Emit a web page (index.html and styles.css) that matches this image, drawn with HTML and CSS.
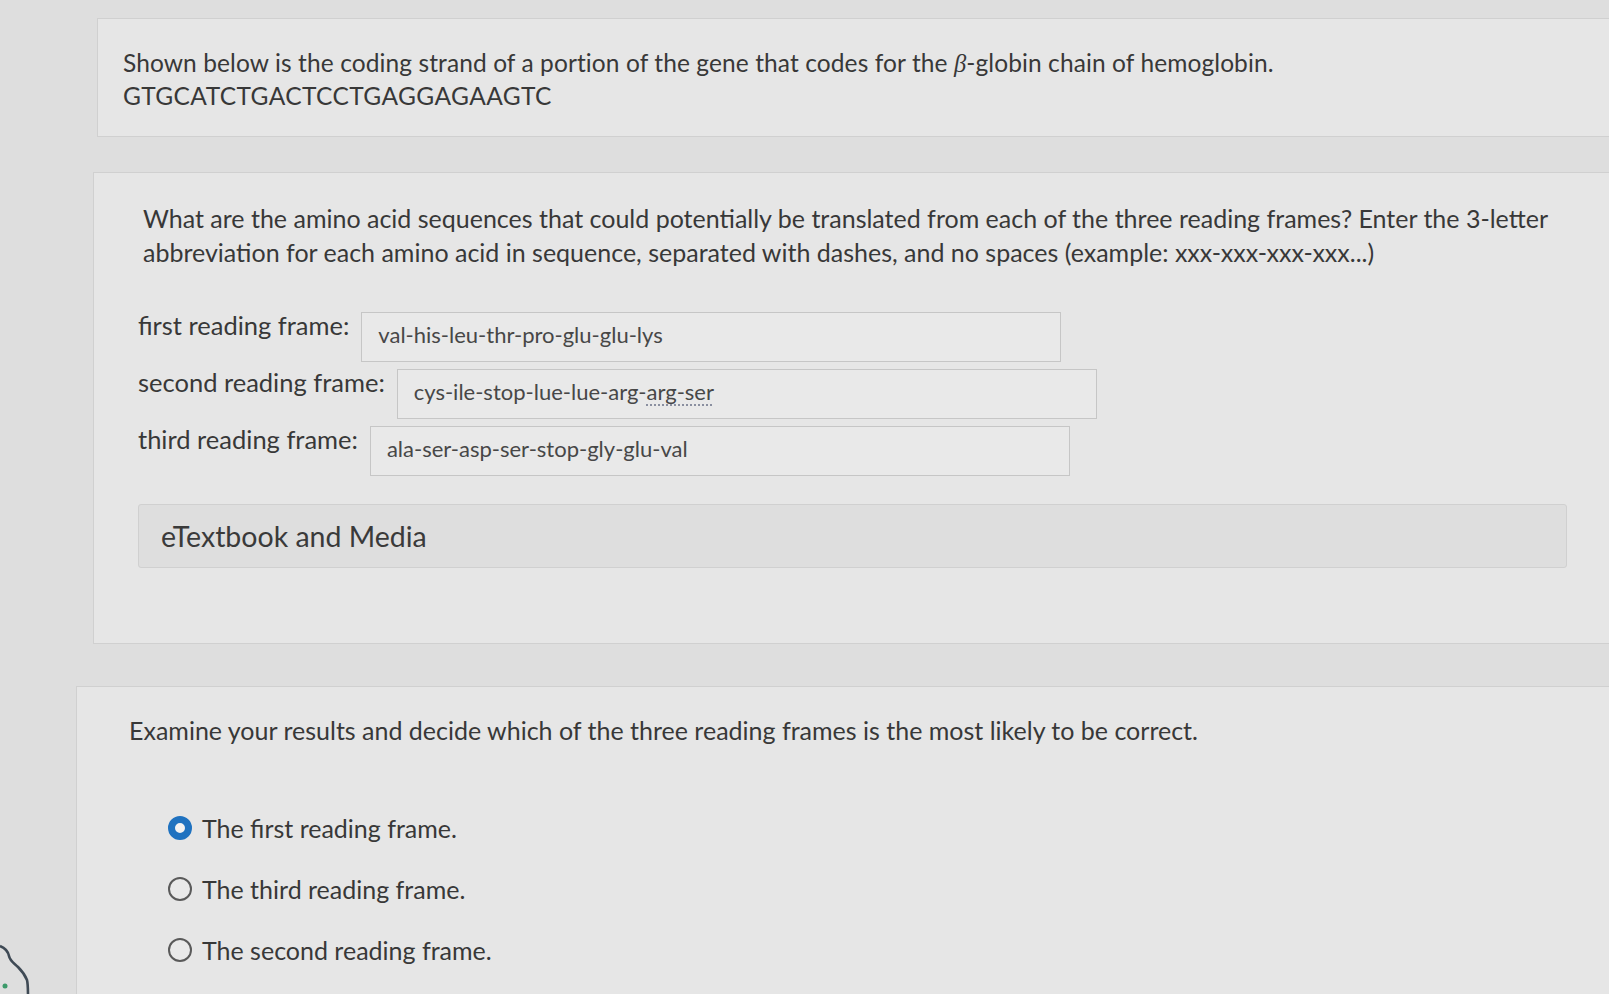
FILE: index.html
```html
<!DOCTYPE html>
<html lang="en">
<head>
<meta charset="utf-8">
<title>Reading frames</title>
<link rel="stylesheet" href="styles.css">
</head>
<body>
<div class="page">
  <section class="card card-intro">
    <p class="intro-text">Shown below is the coding strand of a portion of the gene that codes for the <i class="greek">β</i>-globin chain of hemoglobin.<br><span class="dna">GTGCATCTGACTCCTGAGGAGAAGTC</span></p>
  </section>

  <section class="card card-question">
    <p class="question-text">What are the amino acid sequences that could potentially be translated from each of the three reading frames? Enter the 3-letter abbreviation for each amino acid in sequence, separated with dashes, and no spaces (example: xxx-xxx-xxx-xxx...)</p>
    <div class="frames">
      <div class="frame-row">
        <span class="frame-label">first reading frame:</span>
        <div class="frame-input">val-his-leu-thr-pro-glu-glu-lys</div>
      </div>
      <div class="frame-row">
        <span class="frame-label">second reading frame:</span>
        <div class="frame-input">cys-ile-stop-lue-lue-arg-<span class="spell">arg-ser</span></div>
      </div>
      <div class="frame-row">
        <span class="frame-label">third reading frame:</span>
        <div class="frame-input">ala-ser-asp-ser-stop-gly-glu-val</div>
      </div>
    </div>
    <div class="media-box">eTextbook and Media</div>
  </section>

  <section class="card card-choice">
    <p class="choice-text">Examine your results and decide which of the three reading frames is the most likely to be correct.</p>
    <div class="options">
      <div class="option"><span class="radio radio-on"></span><span class="option-text">The first reading frame.</span></div>
      <div class="option"><span class="radio"></span><span class="option-text">The third reading frame.</span></div>
      <div class="option"><span class="radio"></span><span class="option-text">The second reading frame.</span></div>
    </div>
  </section>
</div>
<svg class="corner-object" width="40" height="60" viewBox="0 0 40 60" aria-hidden="true">
  <path d="M0 4 C5 6 8 9 9 14 C10 19 14 21 18 25 C22 29 25 33 27 38 C28 42 28 48 28 54" fill="none" stroke="#3f4a55" stroke-width="2.6"/>
  <circle cx="5" cy="44" r="2.5" fill="#3c9a6a"/>
</svg>
</body>
</html>
```

FILE: styles.css
```css
html, body {
  margin: 0;
  padding: 0;
}

body {
  background: #dedede;
  font-family: Lato, "Open Sans", "Liberation Sans", sans-serif;
  color: #383838;
  width: 1609px;
  height: 994px;
  overflow: hidden;
  position: relative;
}

.page {
  padding-top: 18px;
}

.card {
  background: #e6e6e6;
  border: 1px solid #d0d0d0;
  border-right: none;
  box-sizing: border-box;
}

.card-intro {
  margin-left: 97px;
  height: 119px;
  padding: 28px 0 0 25px;
}

.intro-text {
  margin: 0;
  font-size: 24.5px;
  line-height: 32px;
  letter-spacing: 0.1px;
}

.dna {
  letter-spacing: 0.4px;
}

.greek {
  font-family: "Liberation Serif", serif;
}

.card-question {
  margin-top: 35px;
  margin-left: 93px;
  padding: 28px 42px 75px 44px;
}

.question-text {
  margin: 0 0 0 5px;
  font-size: 25px;
  line-height: 34px;
}

.frames {
  margin-top: 43px;
  display: flex;
  flex-direction: column;
  gap: 7px;
}

.frame-row {
  display: flex;
  align-items: flex-start;
}

.frame-label {
  font-size: 25.5px;
  line-height: 26px;
  white-space: nowrap;
}

.frame-input {
  margin-left: 12px;
  width: 700px;
  height: 50px;
  box-sizing: border-box;
  border: 1px solid #c6c6c6;
  background: #e9e9e9;
  padding-left: 16px;
  font-size: 22px;
  line-height: 44px;
  color: #474747;
}

.spell {
  text-decoration: underline dotted #8a8fa0;
  text-underline-offset: 4px;
  text-decoration-thickness: 2px;
}

.media-box {
  margin-top: 28px;
  height: 64px;
  box-sizing: border-box;
  background: #dedede;
  border: 1px solid #d0d0d0;
  border-radius: 3px;
  padding-left: 22px;
  font-size: 28.5px;
  line-height: 62px;
  color: #3a3a3a;
}

.card-choice {
  margin-top: 42px;
  margin-left: 76px;
  padding: 28px 0 60px 52px;
  border-bottom: none;
}

.choice-text {
  margin: 0;
  font-size: 25px;
  line-height: 30px;
}

.options {
  margin-top: 66px;
  margin-left: 39px;
  display: flex;
  flex-direction: column;
  gap: 27px;
}

.option {
  display: flex;
  align-items: center;
  height: 34px;
}

.radio {
  width: 24px;
  height: 24px;
  box-sizing: border-box;
  border: 2px solid #5a5a5a;
  border-radius: 50%;
  background: #e9e9e9;
  flex: none;
}

.radio-on {
  border: 7px solid #1f72c0;
  background: #f2f2f2;
}

.option-text {
  margin-left: 10px;
  font-size: 25px;
}

.corner-object {
  position: absolute;
  left: 0;
  top: 942px;
}
```
